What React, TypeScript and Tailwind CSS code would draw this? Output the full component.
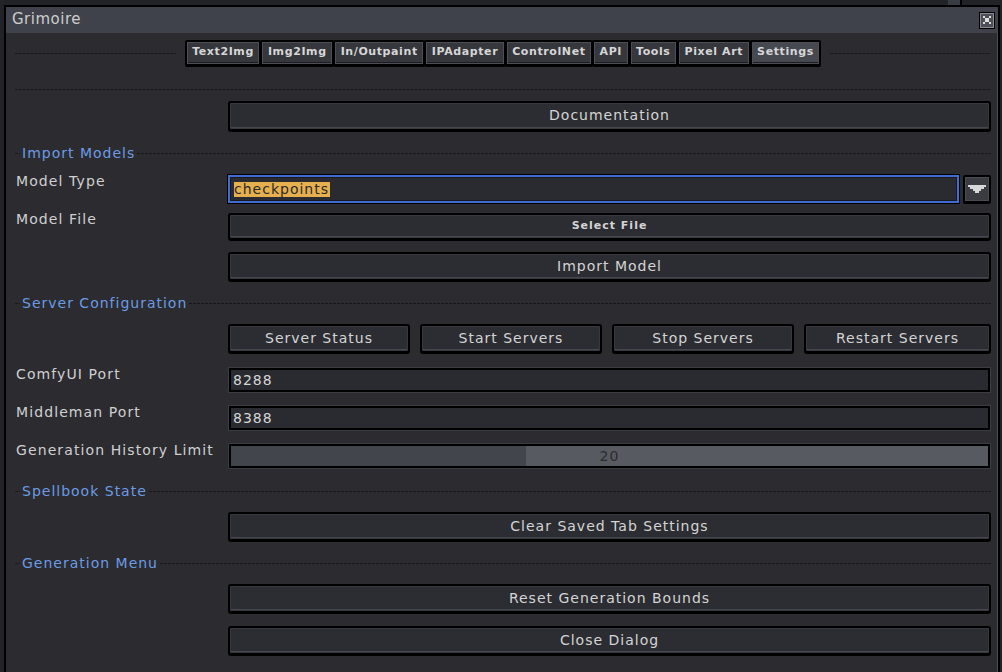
import type { ReactNode } from "react";

const font = "font-['DejaVu_Sans',sans-serif]";

const tabs = ["Text2Img", "Img2Img", "In/Outpaint", "IPAdapter", "ControlNet", "API", "Tools", "Pixel Art", "Settings"];

function Dashes({ className = "" }: { className?: string }) {
  return <div className={`h-px bg-[repeating-linear-gradient(90deg,#18181c_0_3px,transparent_3px_4px)] ${className}`} />;
}

function Section({ title, className = "" }: { title: string; className?: string }) {
  return (
    <div className={`flex h-4 items-center ${className}`}>
      <Dashes className="w-[5px]" />
      <span className="mx-[2px] text-[14px] leading-4 tracking-[1px] text-[#6c9be4]">{title}</span>
      <Dashes className="flex-1" />
    </div>
  );
}

function Btn({ children, className = "", small = false }: { children: ReactNode; className?: string; small?: boolean }) {
  return (
    <div
      className={`flex items-center justify-center rounded-[3px] border-2 border-black bg-[#2c2d32] pb-px text-[#d4d4d4] shadow-[0_1px_0_#000,inset_0_0_0_1px_#38393f,inset_0_-2px_0_#46474e] ${
        small ? "text-[11px] font-bold tracking-[1px]" : "text-[14px] tracking-[1px]"
      } ${className}`}
    >
      {children}
    </div>
  );
}

function Row({ label, children, className = "" }: { label?: string; children: ReactNode; className?: string }) {
  return (
    <div className={`grid grid-cols-[213px_1fr] ${className}`}>
      <div className="-mt-[2px] pl-px text-[14px] leading-4 tracking-[1.1px] text-[#d0d0d0]">{label}</div>
      {children}
    </div>
  );
}

function Field({ value }: { value: string }) {
  return (
    <div className="mx-[1px] flex h-[24px] items-center border-2 border-black bg-[#2a2b30] pl-[2px] text-[14px] tracking-[1px] text-[#d6d6d6] shadow-[0_0_0_1px_#3c3d44]">
      {value}
    </div>
  );
}

export default function App() {
  return (
    <div className={`h-[672px] w-[1002px] overflow-hidden bg-[#222327] ${font}`}>
      <div className="flex h-[5px]">
        <div className="ml-[948px] w-[12px] bg-[#3a3c43]" />
        <div className="w-[2px] bg-black" />
      </div>
      <div className="ml-[4px] h-[700px] w-[996px] border-2 border-black bg-[#2b2b30] shadow-[inset_-1px_0_0_#4a4b52]">
        {/* title bar */}
        <div className="flex h-[26px] items-center justify-between bg-[#3f424a] pl-[6px] pr-[3px]">
          <span className="-mt-px text-[15px] tracking-[0.5px] text-[#cdcdcd]">Grimoire</span>
          <div className="flex h-[17px] w-[16px] items-center justify-center border border-black bg-[#4c4f57] shadow-[inset_0_0_0_1px_#8a8c92]">
            <svg width="10" height="10" viewBox="0 0 10 10" shapeRendering="crispEdges">
              <path d="M1 1h2v2h-2zM7 1h2v2h-2zM3 3h4v4h-4zM1 7h2v2h-2zM7 7h2v2h-2z" fill="#dedede" />
            </svg>
          </div>
        </div>

        <div className="pl-[9px] pr-[7px]">
          {/* tabs */}
          <div className="mt-[7px] flex items-center gap-[9px]">
            <Dashes className="flex-1" />
            <div className="flex">
              {tabs.map((t) => (
                <div
                  key={t}
                  className={`-ml-px flex h-[26px] items-center rounded-[2px] border-2 border-black px-[5.5px] pb-[2px] text-[11px] font-bold tracking-[0.6px] text-[#d6d6d6] shadow-[0_1px_0_#000,inset_0_0_0_1px_#4c4d55,inset_0_-2px_0_#1c1c20] first:ml-0 ${
                    t === "Settings" ? "bg-[#474950]" : "bg-[#36373d]"
                  }`}
                >
                  {t}
                </div>
              ))}
            </div>
            <Dashes className="flex-1" />
          </div>

          <Dashes className="mt-[23px]" />

          <Row className="mt-[11px]">
            <Btn className="h-[30px]">Documentation</Btn>
          </Row>

          <Section title="Import Models" className="mt-[14px]" />

          <Row label="Model Type" className="mt-[14px]">
            <div className="flex h-[28px] gap-[4px]">
              <div className="flex flex-1 items-center border-2 border-[#3f6bd3] bg-[#2a2b30] pl-[4px] shadow-[0_0_0_1px_#000,inset_0_0_0_1px_#1a1a1e]">
                <span className="bg-[#e6b04f] pr-[1px] text-[14px] leading-[15px] tracking-[1px] text-[#2a2a2a]">checkpoints</span>
              </div>
              <div className="flex w-[28px] items-center justify-center rounded-[2px] border-2 border-black bg-[#3a3c42] shadow-[0_1px_0_#000,inset_0_0_0_1px_#4a4c53]">
                <svg width="18" height="8" viewBox="0 0 18 8" shapeRendering="crispEdges">
                  <path d="M0 0h18v2h-2v2h-3v2h-2v2h-4v-2h-2v-2h-3v-2h-2z" fill="#d8d8d8" />
                </svg>
              </div>
            </div>
          </Row>

          <Row label="Model File" className="mt-[10px]">
            <Btn small className="h-[27px]">Select File</Btn>
          </Row>

          <Row className="mt-[12px]">
            <Btn className="h-[29px]">Import Model</Btn>
          </Row>

          <Section title="Server Configuration" className="mt-[14px]" />

          <Row className="mt-[13px]">
            <div className="grid grid-cols-[182px_182px_182px_1fr] gap-[10px]">
              <Btn className="h-[29px]">Server Status</Btn>
              <Btn className="h-[29px]">Start Servers</Btn>
              <Btn className="h-[29px]">Stop Servers</Btn>
              <Btn className="h-[29px]">Restart Servers</Btn>
            </div>
          </Row>

          <Row label="ComfyUI Port" className="mt-[15px]">
            <Field value="8288" />
          </Row>

          <Row label="Middleman Port" className="mt-[14px]">
            <Field value="8388" />
          </Row>

          <Row label="Generation History Limit" className="mt-[14px]">
            <div className="relative mx-[1px] flex h-[24px] border-2 border-black bg-[#575a61] shadow-[0_0_0_1px_#3c3d44]">
              <div className="w-[39%] bg-[#42454c]" />
              <span className="absolute inset-0 flex items-center justify-center text-[14px] tracking-[1px] text-[#2c2d32]">20</span>
            </div>
          </Row>

          <Section title="Spellbook State" className="mt-[15px]" />

          <Row className="mt-[13px]">
            <Btn className="h-[29px]">Clear Saved Tab Settings</Btn>
          </Row>

          <Section title="Generation Menu" className="mt-[14px]" />

          <Row className="mt-[13px]">
            <Btn className="h-[29px]">Reset Generation Bounds</Btn>
          </Row>

          <Row className="mt-[13px]">
            <Btn className="h-[29px]">Close Dialog</Btn>
          </Row>
        </div>
      </div>
    </div>
  );
}
